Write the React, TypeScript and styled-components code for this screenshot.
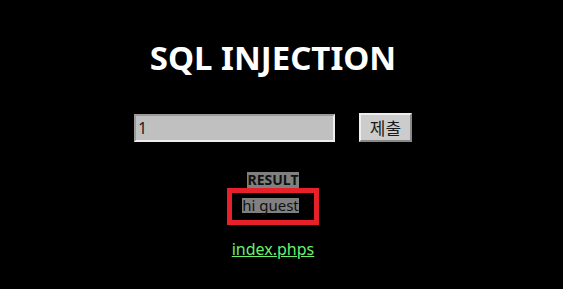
import React from "react";
import styled, { createGlobalStyle } from "styled-components";

const Global = createGlobalStyle`
  html, body { margin: 0; padding: 0; background: #000; }
  body { font-family: "Noto Sans", "Noto Sans CJK KR", sans-serif; }
`;

const Page = styled.div`
  width: 546px;
  height: 289px;
  display: flex;
  flex-direction: column;
  align-items: center;
  padding-top: 34px;
  box-sizing: border-box;
`;

const Title = styled.h1`
  margin: 0;
  color: #fff;
  font-size: 33px;
  font-weight: 700;
  line-height: 48px;
`;

const Form = styled.form`
  display: flex;
  align-items: center;
  gap: 24px;
  margin-top: 31px;
`;

const Input = styled.input`
  box-sizing: border-box;
  width: 201px;
  height: 28px;
  padding: 0 2px;
  background: #c0c0c0;
  border: 2px solid;
  border-color: #999 #eee #eee #999;
  font-family: "Noto Sans", "Noto Sans CJK KR", sans-serif;
  font-size: 16px;
  color: #222;
  outline: none;
`;

const Button = styled.button`
  box-sizing: border-box;
  width: 53px;
  height: 29px;
  padding: 0;
  background: #cccccc;
  border: 2px solid;
  border-color: #eee #888 #888 #eee;
  font-family: "Noto Sans CJK KR", "Noto Sans", sans-serif;
  font-size: 17px;
  color: #1a1a1a;
`;

const Result = styled.div`
  margin-top: 30px;
  display: flex;
  flex-direction: column;
  align-items: center;
`;

const Label = styled.span`
  background: #808080;
  color: #111;
  font-weight: 700;
  font-size: 14px;
  line-height: 16px;
  padding: 0 1px;
`;

const Highlight = styled.div`
  border: 5px solid #e8202a;
  padding: 5px 15px 7px 10px;
`;

const Message = styled.span`
  display: block;
  background: #808080;
  color: #111;
  font-size: 15px;
  line-height: 15px;
`;

const SourceLink = styled.a`
  margin-top: 13px;
  color: #6cf06c;
  font-size: 16px;
  text-decoration: underline;
`;

export default function App() {
  return (
    <>
      <Global />
      <Page>
        <Title>SQL INJECTION</Title>
        <Form onSubmit={(e) => e.preventDefault()}>
          <Input defaultValue="1" />
          <Button type="submit">제출</Button>
        </Form>
        <Result>
          <Label>RESULT</Label>
          <Highlight>
            <Message>hi guest</Message>
          </Highlight>
        </Result>
        <SourceLink href="#">index.phps</SourceLink>
      </Page>
    </>
  );
}
